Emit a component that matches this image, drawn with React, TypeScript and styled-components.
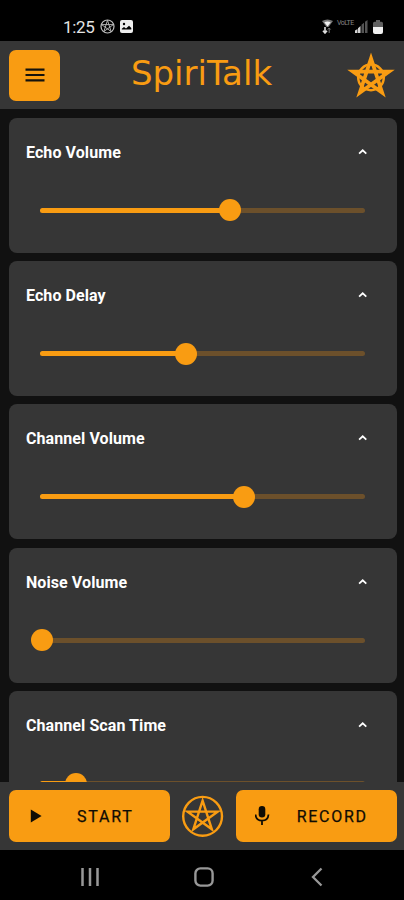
import React from "react";
import styled, { createGlobalStyle } from "styled-components";

const ORANGE = "#f99c12";
const PANEL = "#363636";

const GlobalStyle = createGlobalStyle`
  *, *::before, *::after { box-sizing: border-box; }
  body { margin: 0; background: #000; font-family: Roboto, "Liberation Sans", sans-serif; }
  button { font: inherit; border: 0; padding: 0; margin: 0; background: none; }
  svg { display: block; flex: none; }
`;

const Screen = styled.div`
  width: 404px;
  height: 900px;
  display: flex;
  flex-direction: column;
  overflow: hidden;
  background: #111;
`;

const StatusBar = styled.div`
  height: 41px;
  flex: none;
  display: flex;
  justify-content: space-between;
  align-items: center;
  padding: 12px 21px 0 63px;
  background: #000;
  color: #e4e4e4;
`;

const StatusGroup = styled.div<{ $gap: number }>`
  display: flex;
  align-items: center;
  gap: ${(p) => p.$gap}px;
`;

const Clock = styled.span`
  font-size: 17px;
  line-height: 20px;
  width: 32px;
  letter-spacing: -0.3px;
  white-space: nowrap;
`;

const Header = styled.header`
  height: 68px;
  flex: none;
  display: grid;
  grid-template-columns: 51px 1fr 50px;
  align-items: center;
  padding: 0 8px 0 9px;
  background: ${PANEL};
`;

const MenuButton = styled.button`
  width: 51px;
  height: 51px;
  border-radius: 7px;
  background: ${ORANGE};
  display: grid;
  place-items: center;
`;

const Title = styled.h1`
  margin: 0 0 5px -3px;
  text-align: center;
  font: 400 34px/40px "DejaVu Sans", sans-serif;
  color: ${ORANGE};
`;

const List = styled.main`
  flex: 1;
  min-height: 0;
  overflow: hidden;
  display: flex;
  flex-direction: column;
  gap: 8.4px;
  padding: 8.5px 7.5px 0 9px;
`;

const Card = styled.section`
  height: 135px;
  flex: none;
  border-radius: 8px;
  background: ${PANEL};
`;

const CardHead = styled.div`
  height: 68px;
  display: flex;
  align-items: center;
  justify-content: space-between;
  padding: 0 29px 0 17px;
`;

const CardTitle = styled.h2`
  margin: 2px 0 0;
  font-size: 16px;
  line-height: 20px;
  font-weight: 700;
  letter-spacing: 0.08px;
  color: #fff;
`;

const Slider = styled.div`
  height: 50px;
  margin: 0 32px 0 31px;
  display: flex;
  align-items: center;
`;

const Track = styled.div`
  position: relative;
  width: 100%;
  height: 5px;
  margin-top: -0.6px;
  border-radius: 2.5px;
  background: #6c502b;
`;

const Fill = styled.div`
  height: 100%;
  border-radius: 2.5px;
  background: ${ORANGE};
`;

const Thumb = styled.div`
  position: absolute;
  top: 50%;
  width: 22px;
  height: 22px;
  margin: -11px 0 0 -11px;
  border-radius: 50%;
  background: ${ORANGE};
`;

const ActionBar = styled.footer`
  height: 68px;
  flex: none;
  display: flex;
  align-items: center;
  justify-content: space-between;
  padding: 0 7.5px 0 9px;
  background: ${PANEL};
`;

const ActionButton = styled.button`
  width: 160.5px;
  height: 52px;
  border-radius: 7px;
  background: ${ORANGE};
  color: #100c04;
  display: grid;
  grid-template-columns: 53px 1fr;
  align-items: center;
  justify-items: center;
`;

const ActionLabel = styled.span`
  font-size: 16px;
  line-height: 20px;
  font-weight: 400;
  letter-spacing: 1.75px;
  -webkit-text-stroke: 0.25px #100c04;
  margin: 2px 0 0 -21px;
`;

const NavBar = styled.nav`
  height: 50px;
  flex: none;
  display: grid;
  grid-template-columns: repeat(3, 113.5px);
  justify-content: center;
  justify-items: center;
  align-items: center;
  padding: 3px 0 0 3px;
  background: #000;
`;

const starPoints = (cx: number, cy: number, r: number) =>
  [0, 2, 4, 1, 3]
    .map((i) => {
      const a = ((i * 72 - 90) * Math.PI) / 180;
      return `${(cx + r * Math.cos(a)).toFixed(2)},${(cy + r * Math.sin(a)).toFixed(2)}`;
    })
    .join(" ");

const WovenStar = () => (
  <svg width="50" height="52" viewBox="0 0 50 52">
    <g fill="none" stroke={ORANGE} strokeLinejoin="miter" strokeMiterlimit="10">
      <circle cx="25" cy="28.4" r="12.8" strokeWidth="2.5" />
      <polygon points={starPoints(25, 28.4, 19)} strokeWidth="3.7" />
    </g>
  </svg>
);

const CircledStar = () => (
  <svg width="42" height="42" viewBox="0 0 42 42" fill="none" stroke={ORANGE}>
    <circle cx="20.6" cy="21.3" r="19.4" strokeWidth="2.4" />
    <polygon points={starPoints(20.6, 21.5, 15.8)} strokeWidth="2.4" strokeMiterlimit="10" />
  </svg>
);

const WheelIcon = () => (
  <svg width="15" height="15" viewBox="0 0 15 15" fill="none" stroke="#bdbdbd">
    <circle cx="7.5" cy="7.5" r="6.5" strokeWidth="1.2" />
    <polygon points={starPoints(7.5, 7.5, 6.2)} strokeWidth=".9" />
  </svg>
);

const PictureIcon = () => (
  <svg width="13" height="13" viewBox="0 0 13 13">
    <rect width="13" height="13" rx="2" fill="#eee" />
    <circle cx="4" cy="4" r="1.2" fill="#000" />
    <path d="M1.8 8.7 4 7l2 1.5L9 5.8l2.3 2.1v1.5H1.8z" fill="#000" />
  </svg>
);

const WifiIcon = () => (
  <svg width="11" height="15" viewBox="0 0 11 15">
    <path d="M0 2Q5.5-1 11 2L6.5 8h-2z" fill="#777" />
    <path d="M2.3 3.2Q5.5 1.8 8.7 3.2L5.5 7.6z" fill="#eee" />
    <path d="M3 8v6M1 11.7l2 2.3 2-2.3" stroke="#ddd" strokeWidth="1.6" fill="none" />
    <path d="M7.2 14V9M5.8 10.5 7.2 9l1.4 1.5" stroke="#777" fill="none" />
  </svg>
);

const NetworkLabel = styled.span`
  width: 16px;
  font-size: 7px;
  line-height: 8px;
  letter-spacing: -0.5px;
  color: #858585;
  margin: -7px 1px 0 3px;
`;

const SignalIcon = () => (
  <svg width="13" height="13" viewBox="0 0 13 13">
    <path d="M0 13v-2.5L2.5 9v4zM3 13V8.3L5.5 6v7z" fill="#d5d5d5" />
    <path d="M6.5 13V4.8L9 2.8V13zM10 13V1.8L12.5 0v13z" fill="#545454" />
  </svg>
);

const BatteryIcon = () => (
  <svg width="10" height="14" viewBox="0 0 10 14">
    <path d="M3 0h4v1.8h1.5Q10 1.8 10 3.5V7H0V3.5Q0 1.8 1.5 1.8H3z" fill="#606060" />
    <path d="M0 7h10v5q0 2-2 2H2q-2 0-2-2z" fill="#f0f0f0" />
  </svg>
);

const MenuIcon = () => (
  <svg width="20" height="14" viewBox="0 0 20 14">
    <path d="M.5 1.6h19M.5 7h19M.5 12.4h19" stroke="#15120c" strokeWidth="2.1" />
  </svg>
);

const Chevron = () => (
  <svg width="10" height="8" viewBox="0 0 10 8">
    <path d="M1.1 5.6 4.7 2.3 8.3 5.6" fill="none" stroke="#fff" strokeWidth="1.8" />
  </svg>
);

const PlayIcon = () => (
  <svg width="12" height="14" viewBox="0 0 12 14">
    <path d="M.8.5 11.6 7 .8 13.5z" fill="#100c04" />
  </svg>
);

const MicIcon = () => (
  <svg width="16" height="20" viewBox="0 0 16 20">
    <g transform="translate(-1 -.5)">
      <rect x="4.7" y=".5" width="6.6" height="11.5" rx="3.3" fill="#100c04" />
      <path d="M1.5 9Q2 15.2 8 15.2T14.5 9M8 15v4.6" fill="none" stroke="#100c04" strokeWidth="1.8" />
    </g>
  </svg>
);

const RecentsIcon = () => (
  <svg width="20" height="20" viewBox="0 0 20 20">
    <path d="M2.5 1v18M10 1v18M17.5 1v18" stroke="#989898" strokeWidth="2.5" />
  </svg>
);

const HomeIcon = () => (
  <svg width="20" height="20" viewBox="0 0 20 20">
    <rect x="1.4" y="1.4" width="17.2" height="17.2" rx="5" fill="none" stroke="#989898" strokeWidth="2.4" />
  </svg>
);

const BackIcon = () => (
  <svg width="12" height="20" viewBox="0 0 12 20">
    <path d="M10.5 1.5 2 10l8.5 8.5" fill="none" stroke="#989898" strokeWidth="2.3" />
  </svg>
);

const controls = [
  { name: "Echo Volume", value: 58.5 },
  { name: "Echo Delay", value: 45 },
  { name: "Channel Volume", value: 62.8 },
  { name: "Noise Volume", value: 0.7 },
  { name: "Channel Scan Time", value: 11.1 },
];

export default function App() {
  return (
    <>
      <GlobalStyle />
      <Screen>
        <StatusBar>
          <StatusGroup $gap={5}>
            <Clock>1:25</Clock>
            <WheelIcon />
            <PictureIcon />
          </StatusGroup>
          <StatusGroup $gap={5}>
            <StatusGroup $gap={1}>
              <WifiIcon />
              <NetworkLabel>VoLTE</NetworkLabel>
              <SignalIcon />
            </StatusGroup>
            <BatteryIcon />
          </StatusGroup>
        </StatusBar>
        <Header>
          <MenuButton aria-label="Menu">
            <MenuIcon />
          </MenuButton>
          <Title>SpiriTalk</Title>
          <WovenStar />
        </Header>
        <List>
          {controls.map((c) => (
            <Card key={c.name}>
              <CardHead>
                <CardTitle>{c.name}</CardTitle>
                <Chevron />
              </CardHead>
              <Slider>
                <Track>
                  <Fill style={{ width: `${c.value}%` }} />
                  <Thumb style={{ left: `${c.value}%` }} />
                </Track>
              </Slider>
            </Card>
          ))}
        </List>
        <ActionBar>
          <ActionButton>
            <PlayIcon />
            <ActionLabel>START</ActionLabel>
          </ActionButton>
          <CircledStar />
          <ActionButton>
            <MicIcon />
            <ActionLabel>RECORD</ActionLabel>
          </ActionButton>
        </ActionBar>
        <NavBar>
          <RecentsIcon />
          <HomeIcon />
          <BackIcon />
        </NavBar>
      </Screen>
    </>
  );
}
